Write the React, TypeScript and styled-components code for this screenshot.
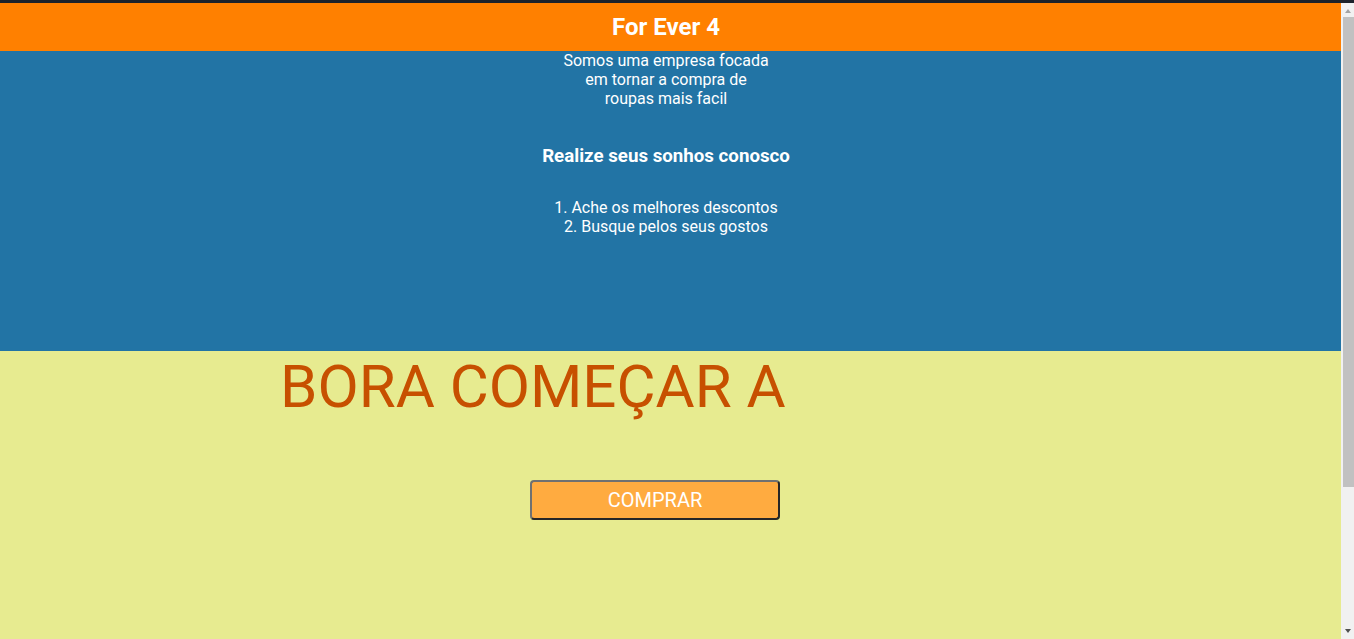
import styled, { createGlobalStyle } from "styled-components";

const GlobalStyle = createGlobalStyle`
	html, body {
		margin: 0;
		padding: 0;
	}

	body {
		font-family: Roboto, "Liberation Sans", sans-serif;
		background: #e7eb90;
	}
`;

const Page = styled.div`
	display: flex;
	flex-direction: column;
	margin-right: 13px;
`;

const TopEdge = styled.div`
	position: fixed;
	top: 0;
	left: 0;
	right: 0;
	z-index: 2;
	height: 3px;
	background: #1c222b;
`;

// fake classic scrollbar, drawn over the right edge of the window
const Scrollbar = styled.div`
	position: fixed;
	top: 0;
	right: 0;
	z-index: 1;
	width: 13px;
	height: 100vh;
	background: #f1f1f1;
`;

const Arrow = styled.div<{ $down?: boolean; $color: string }>`
	position: absolute;
	left: 4px;
	${(p) => (p.$down ? "bottom: 6px;" : "top: 9px;")}
	width: 0;
	height: 0;
	border-left: 3.5px solid transparent;
	border-right: 3.5px solid transparent;
	${(p) => (p.$down ? `border-top: 4px solid ${p.$color};` : `border-bottom: 4px solid ${p.$color};`)}
`;

const Thumb = styled.div`
	position: absolute;
	top: 17px;
	left: 2px;
	right: 0;
	height: 470px;
	background: #c1c1c1;
`;

const Header = styled.header`
	height: 48px;
	margin-top: 3px;
	display: flex;
	justify-content: center;
	align-items: center;
	padding-right: 9px;

	background: #ff8000;
	color: #ffffff;
	font-size: 24px;
	font-weight: 700;
`;

const About = styled.section`
	height: 300px;
	display: flex;
	flex-direction: column;
	align-items: center;
	padding-right: 9px;

	background: #2274a5;
	color: #ffffff;
	font-size: 16px;
	text-align: center;
`;

const Intro = styled.p`
	width: 212px;
	margin: 0;
`;

const Slogan = styled.h3`
	margin: 37px 0 0;
	font-size: 18.72px;
	font-weight: 700;
`;

const Steps = styled.ol`
	margin: 31px 0 0;
	padding: 0;
	list-style-position: inside;
`;

const Call = styled.section`
	min-height: 473px;
	display: flex;
	flex-direction: column;
	padding-left: 280px;

	background: #e7eb90;
`;

const Title = styled.h1`
	margin: 0;
	color: #c75000;
	font-size: 60px;
	font-weight: 400;
`;

const ButtonRow = styled.div`
	display: flex;
	padding: 58px 0 0 250px;
`;

const BuyButton = styled.button`
	width: 250px;
	height: 40px;
	border: 2px solid;
	border-color: #707070 #262626 #262626 #707070;
	border-radius: 4px;

	background: #ffab40;
	color: #ffffff;
	font-family: Roboto, "Liberation Sans", sans-serif;
	font-size: 20px;
	cursor: pointer;
`;

const App = () => {
	return (
		<Page>
			<GlobalStyle />
			<TopEdge />
			<Scrollbar>
				<Arrow $color="#a3a3a3" />
				<Thumb />
				<Arrow $down $color="#505050" />
			</Scrollbar>
			<Header>For Ever 4</Header>
			<About>
				<Intro>Somos uma empresa focada em tornar a compra de roupas mais facil</Intro>
				<Slogan>Realize seus sonhos conosco</Slogan>
				<Steps>
					<li>Ache os melhores descontos</li>
					<li>Busque pelos seus gostos</li>
				</Steps>
			</About>
			<Call>
				<Title>BORA COMEÇAR A</Title>
				<ButtonRow>
					<BuyButton>COMPRAR</BuyButton>
				</ButtonRow>
			</Call>
		</Page>
	);
};

export default App;
